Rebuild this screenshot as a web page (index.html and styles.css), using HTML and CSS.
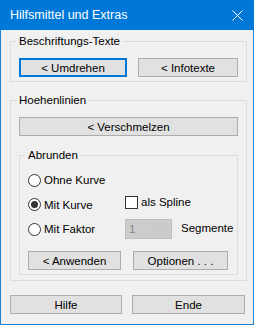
FILE: index.html
```html
<!DOCTYPE html>
<html lang="de">

<head>
    <meta charset="UTF-8">
    <title>Hilfsmittel und Extras</title>
    <link rel="stylesheet" href="styles.css">
</head>

<body>
    <div class="window">
        <div class="titlebar">
            <span class="title">Hilfsmittel und Extras</span>
            <svg class="close" width="11" height="11" viewBox="0 0 11 11">
                <path d="M0.5 0.5 L10.5 10.5 M10.5 0.5 L0.5 10.5" stroke="#fff" stroke-width="1" fill="none" />
            </svg>
        </div>

        <div class="dialog">
            <fieldset class="group">
                <legend>Beschriftungs-Texte</legend>
                <div class="button-row">
                    <button class="btn btn-umdrehen focused">&lt; Umdrehen</button>
                    <button class="btn btn-infotexte">&lt; Infotexte</button>
                </div>
            </fieldset>

            <fieldset class="group group-hoehen">
                <legend>Hoehenlinien</legend>
                <button class="btn btn-wide">&lt; Verschmelzen</button>

                <fieldset class="group group-inner">
                    <legend>Abrunden</legend>
                    <div class="options">
                        <label class="radio"><span class="radio-box"></span>Ohne Kurve</label>
                        <span></span>
                        <span></span>

                        <label class="radio"><span class="radio-box checked"></span>Mit Kurve</label>
                        <label class="check"><span class="check-box"></span>als Spline</label>
                        <span></span>

                        <label class="radio"><span class="radio-box"></span>Mit Faktor</label>
                        <div class="combo">
                            <span class="combo-value">1</span>
                            <svg class="combo-arrow" width="9" height="5" viewBox="0 0 9 5">
                                <path d="M0.5 0.5 L4.5 4.5 L8.5 0.5" stroke="#bfbfbf" fill="none" />
                            </svg>
                        </div>
                        <span class="segmente">Segmente</span>
                    </div>
                    <div class="button-row inner-buttons">
                        <button class="btn btn-anwenden">&lt; Anwenden</button>
                        <button class="btn btn-optionen">Optionen . . .</button>
                    </div>
                </fieldset>
            </fieldset>

            <div class="button-row footer">
                <button class="btn btn-hilfe">Hilfe</button>
                <button class="btn btn-ende">Ende</button>
            </div>
        </div>
    </div>
</body>

</html>
```

FILE: styles.css
```css
* {
    box-sizing: border-box;
}

body {
    margin: 0;
    font-family: "Liberation Sans", Arial, sans-serif;
    font-size: 11.5px;
    color: #000;
    background: #f0f0f0;
}

.window {
    width: 254px;
    height: 325px;
    border: 1px solid #1883d7;
    border-top: none;
    background: #f0f0f0;
}

.titlebar {
    height: 30px;
    margin: 0 -1px;
    padding: 0 11px 0 10px;
    background: #0078d7;
    color: #fff;
    display: flex;
    align-items: center;
    justify-content: space-between;
    font-size: 12.5px;
}

.close {
    display: block;
}

.dialog {
    padding: 4px 6px 0 9px;
}

.group {
    margin: 0;
    padding: 0 8px 4px 8px;
    border: 1px solid #dcdcdc;
    min-width: 0;
}

.group legend {
    padding: 0 2px 0 3px;
    margin-left: -3px;
    line-height: 15px;
}

.group-hoehen {
    margin-top: 11px;
}

.button-row {
    display: flex;
    justify-content: space-between;
    padding-top: 9px;
}

.btn {
    font-family: inherit;
    font-size: 11.5px;
    color: #000;
    height: 19px;
    padding: 0;
    background: #e1e1e1;
    border: 1px solid #adadad;
    margin: 0;
}

.btn.focused {
    border: 2px solid #0078d7;
}

.btn-umdrehen {
    width: 108px;
}

.btn-infotexte {
    width: 100px;
}

.btn-wide {
    display: block;
    width: 100%;
    margin-top: 9px;
}

.group-inner {
    margin-top: 12px;
    margin-bottom: 1px;
}

.options {
    display: grid;
    grid-template-columns: 97px 56px auto;
    grid-template-rows: 24px 25px 24px;
    align-items: center;
    padding-top: 5px;
}

.radio,
.check {
    display: flex;
    align-items: center;
    gap: 3px;
    white-space: nowrap;
}

.radio-box {
    flex: none;
    width: 13px;
    height: 13px;
    border: 1px solid #333;
    border-radius: 50%;
    background: #fff;
    display: flex;
    align-items: center;
    justify-content: center;
}

.radio-box.checked::after {
    content: '';
    width: 7px;
    height: 7px;
    border-radius: 50%;
    background: #333;
}

.check {
    margin-top: -5px;
}

.check-box {
    flex: none;
    width: 13px;
    height: 13px;
    border: 1px solid #333;
    background: #fff;
}

.combo {
    width: 47px;
    height: 20px;
    background: #cccccc;
    border: 1px solid #bfbfbf;
    display: flex;
    align-items: center;
    justify-content: space-between;
    padding: 0 6px 0 3px;
    color: #838383;
}

.combo-arrow {
    display: block;
}

.segmente {
    margin-top: -3px;
}

.inner-buttons {
    padding: 10px 1px 0 0;
}

.btn-anwenden {
    width: 93px;
}

.btn-optionen {
    width: 95px;
}

.footer {
    padding: 14px 2px 0 0;
}

.btn-hilfe {
    width: 112px;
}

.btn-ende {
    width: 113px;
}
```
